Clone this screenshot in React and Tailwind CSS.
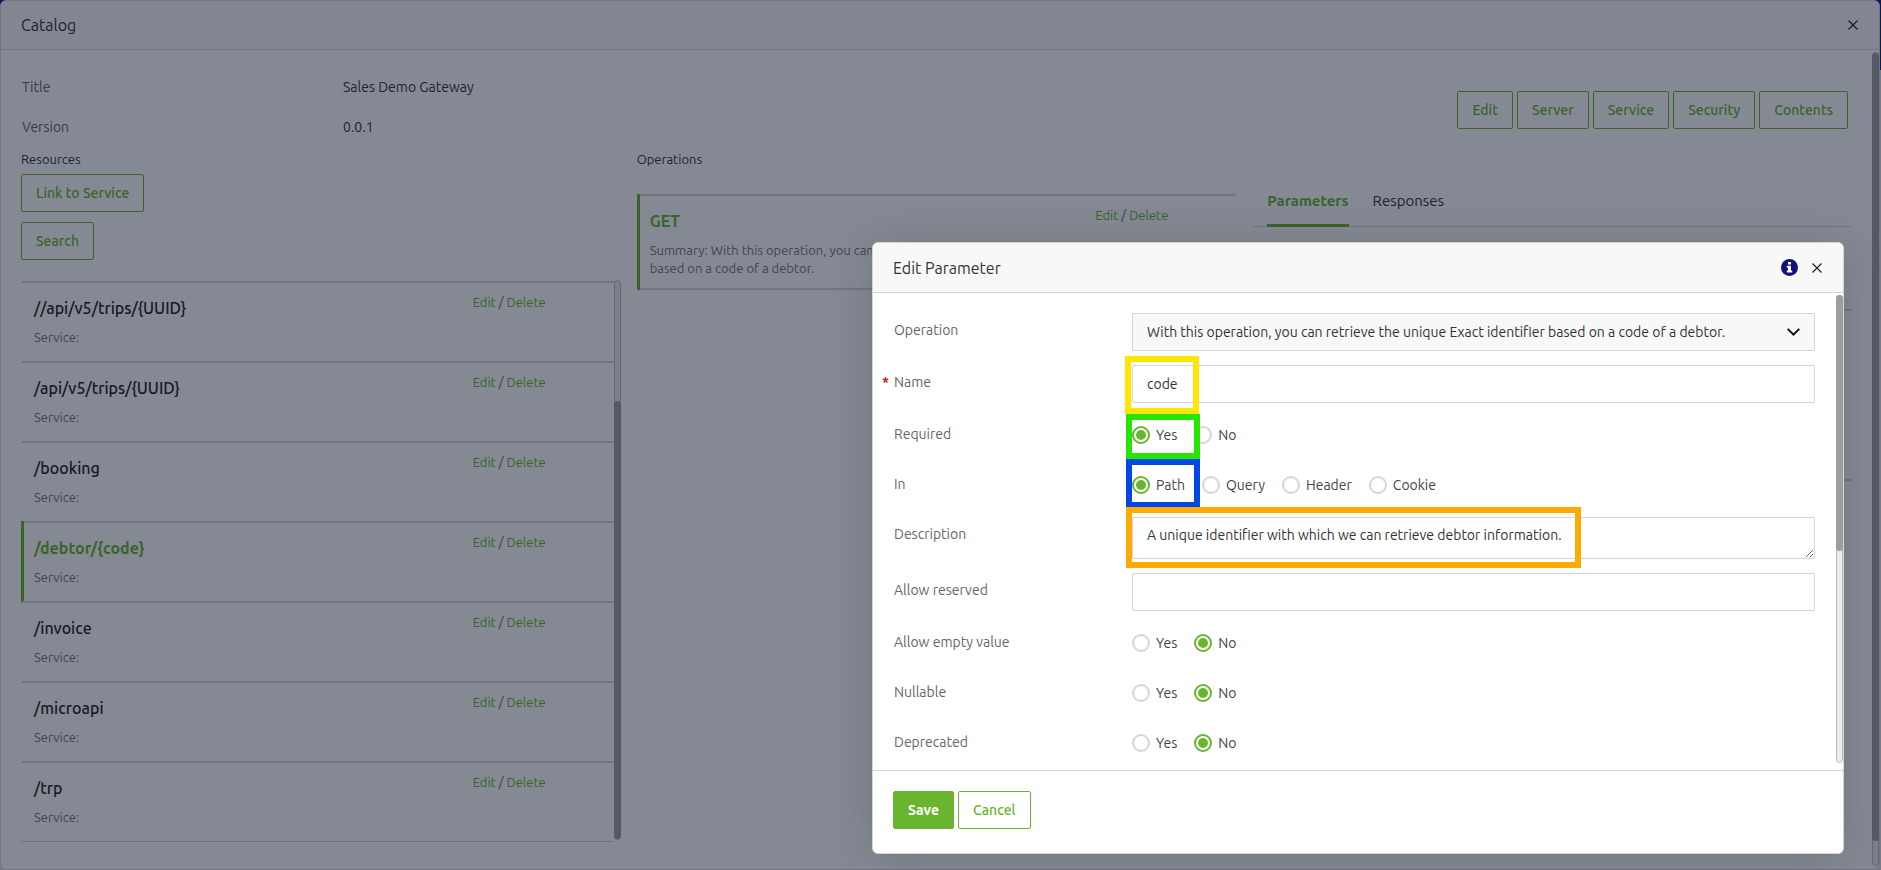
import React, { useState } from 'react'

const resources = [
  '//api/v5/trips/{UUID}',
  '/api/v5/trips/{UUID}',
  '/booking',
  '/debtor/{code}',
  '/invoice',
  '/microapi',
  '/trp',
]

const catalogActions = ['Edit', 'Server', 'Service', 'Security', 'Contents']

const operationText =
  'With this operation, you can retrieve the unique Exact identifier based on a code of a debtor.'

function CloseIcon() {
  return (
    <svg className="h-[10px] w-[10px]" viewBox="0 0 10 10" fill="none" stroke="#222" strokeWidth="1.2">
      <path d="M0.5 0.5L9.5 9.5M9.5 0.5L0.5 9.5" />
    </svg>
  )
}

function OutlineButton({ children }) {
  return (
    <button
      type="button"
      className="h-[38px] rounded-xs border border-[#69b52f] px-[14px] text-sm font-medium text-[#69b52f]"
    >
      {children}
    </button>
  )
}

function RowLinks() {
  return (
    <div className="w-[141px] shrink-0 pt-[9px] text-[13px] leading-5 text-[#666]">
      <a href="#edit" className="text-[#69b52f]">Edit</a>
      {' / '}
      <a href="#delete" className="text-[#69b52f]">Delete</a>
    </div>
  )
}

function Radios({ name, label, options, value }) {
  const [selected, setSelected] = useState(value)
  return (
    <div role="radiogroup" aria-label={label} className="flex h-9 items-center gap-[17px]">
      {options.map((option) => (
        <label key={option} className="flex items-center gap-[6px] text-sm leading-[18px] text-[#444]">
          <input
            type="radio"
            name={name}
            checked={selected === option}
            onChange={() => setSelected(option)}
            className="grid h-[18px] w-[18px] appearance-none place-content-center rounded-full border-2 border-[#d6d6d6] bg-white before:h-[10px] before:w-[10px] before:rounded-full checked:border-[#69b52f] checked:before:bg-[#69b52f]"
          />
          {option}
        </label>
      ))}
    </div>
  )
}

function Field({ label, htmlFor, required, children }) {
  const Label = htmlFor ? 'label' : 'span'
  return (
    <div className="mb-[14px] flex items-start">
      <Label htmlFor={htmlFor} className="relative w-[238px] shrink-0 pt-2 text-sm leading-[18px] text-[#666]">
        {required && <span className="absolute -left-3 font-bold text-[#b02a2a]">*</span>}
        {label}
      </Label>
      <div className="relative min-w-0 flex-1">{children}</div>
    </div>
  )
}

function CatalogPanel() {
  return (
    <div className="flex h-full flex-col overflow-hidden rounded-md border border-[#d9d9d9] bg-white">
      <header className="flex h-[49px] shrink-0 items-center justify-between border-b border-[#d9d9d9] bg-[#f8f8f8] pr-[21px] pl-5">
        <h1 className="text-base text-[#333]">Catalog</h1>
        <button type="button" aria-label="Close catalog"><CloseIcon /></button>
      </header>

      <div className="flex min-h-0 flex-1">
        <div className="min-w-0 flex-1 px-5 pt-[17px]">
          <div className="flex items-start justify-between">
            <dl className="grid grid-cols-[321px_auto] pl-px text-sm leading-10">
              <dt className="text-[#666]">Title</dt>
              <dd className="text-[#333]">Sales Demo Gateway</dd>
              <dt className="text-[#666]">Version</dt>
              <dd className="text-[#333]">0.0.1</dd>
            </dl>
            <div className="flex gap-1 pt-6 pr-1">
              {catalogActions.map((action) => (
                <OutlineButton key={action}>{action}</OutlineButton>
              ))}
            </div>
          </div>

          <div className="grid grid-cols-3 gap-4">
            <section>
              <h2 className="text-[13px] leading-6 text-[#333]">Resources</h2>
              <div className="mt-[3px] flex flex-col items-start gap-[10px]">
                <OutlineButton>Link to Service</OutlineButton>
                <OutlineButton>Search</OutlineButton>
              </div>
              <div className="mt-5 flex">
                <ul className="min-w-0 flex-1 border-b border-[#d9d9d9] pt-px pl-px">
                  {resources.map((path) => {
                    const active = path === '/debtor/{code}'
                    return (
                      <li key={path} className="relative flex h-20 border-t-2 border-[#d9d9d9]">
                        {active && <span className="absolute -top-0.5 -left-px h-[82px] w-[3px] bg-[#69b52f]" />}
                        <div className="min-w-0 flex-1 pt-[13px] pl-3">
                          <h3 className={active ? 'text-base leading-6 font-bold text-[#69b52f]' : 'text-base leading-6 font-medium text-[#222]'}>
                            {path}
                          </h3>
                          <p className="mt-[7px] text-[13px] leading-5 text-[#777]">Service:</p>
                        </div>
                        <RowLinks />
                      </li>
                    )
                  })}
                </ul>
                <div className="mb-0.5 flex w-[7px] flex-col justify-end rounded-full border border-[#bbb] bg-[#ececec]">
                  <div className="-mx-px h-[438px] rounded-full bg-[#9e9e9e]" />
                </div>
              </div>
            </section>

            <section>
              <h2 className="text-[13px] leading-6 text-[#333]">Operations</h2>
              <div className="relative mt-[23px] flex border-y-2 border-[#d9d9d9]">
                <span className="absolute -inset-y-0.5 left-0 w-[3px] bg-[#69b52f]" />
                <div className="min-w-0 flex-1 pt-[13px] pb-[11px] pl-[13px]">
                  <h3 className="text-base leading-6 font-bold text-[#69b52f]">GET</h3>
                  <p className="mt-2 text-[13px] leading-[18px] text-[#777]">Summary: {operationText}</p>
                </div>
                <RowLinks />
              </div>
            </section>

            <section>
              <div role="tablist" className="flex h-20 items-end gap-6 border-b border-[#d9d9d9] px-[15px] text-[15px]">
                <button type="button" role="tab" aria-selected="true" className="-mb-px border-b-3 border-[#69b52f] pb-[11px] leading-6 font-bold text-[#69b52f]">
                  Parameters
                </button>
                <button type="button" role="tab" aria-selected="false" className="-mb-px border-b-3 border-transparent pb-[11px] leading-6 text-[#333]">
                  Responses
                </button>
              </div>
              <div className="h-[84px] border-b-2 border-[#d9d9d9]" />
              <div className="h-[170px] border-b-2 border-[#d9d9d9]" />
            </section>
          </div>
        </div>

        <div className="mt-0.5 mb-[3px] w-[7px] shrink-0 rounded-full border border-[#bbb] bg-[#ececec]">
          <div className="-mx-px h-[97%] rounded-full bg-[#9e9e9e]" />
        </div>
      </div>
    </div>
  )
}

function EditParameterDialog() {
  return (
    <div
      role="dialog"
      aria-label="Edit Parameter"
      className="w-[972px] max-w-full overflow-hidden rounded-md border border-[#d4d4d4] bg-white shadow-[0_4px_48px_rgba(0,0,0,0.14)]"
    >
      <header className="flex h-[50px] items-center justify-between border-b border-[#d4d4d4] bg-[#f8f8f8] pr-[21px] pl-5">
        <h2 className="text-base text-[#333]">Edit Parameter</h2>
        <div className="flex items-center gap-[14px]">
          <button type="button" aria-label="Information">
            <svg className="h-[17px] w-[17px]" viewBox="0 0 17 17">
              <circle cx="8.5" cy="8.5" r="8.5" fill="#10107f" />
              <path d="M7 3h3v2.6H7zM5.8 6.8H10v4.8h1.2v1.9H5.8v-1.9H7V8.7H5.8z" fill="#fff" />
            </svg>
          </button>
          <button type="button" aria-label="Close dialog"><CloseIcon /></button>
        </div>
      </header>

      <div className="flex h-[477px] overflow-hidden">
        <form className="min-w-0 flex-1 pt-5 pr-[21px] pl-[21px]">
          <Field label="Operation" htmlFor="operation">
            <select
              id="operation"
              className="block h-[38px] w-full appearance-none rounded-xs border border-[#d4d4d4] bg-[#f8f8f8] px-[14px] text-sm text-[#333]"
            >
              <option>{operationText}</option>
            </select>
            <svg className="pointer-events-none absolute top-[15px] right-[15px] h-2 w-[13px]" viewBox="0 0 13 8" fill="none" stroke="#111" strokeWidth="2">
              <path d="M0.7 0.9L6.5 6.6L12.3 0.9" />
            </svg>
          </Field>
          <Field label="Name" htmlFor="name" required>
            <input
              id="name"
              type="text"
              defaultValue="code"
              className="block h-[38px] w-full rounded-xs border border-[#d4d4d4] px-[14px] text-sm text-[#333]"
            />
            <span className="pointer-events-none absolute -top-[9px] -left-[7px] h-[58px] w-[74px] border-6 border-[#ffe600]" />
          </Field>
          <Field label="Required">
            <Radios name="required" label="Required" options={['Yes', 'No']} value="Yes" />
            <span className="pointer-events-none absolute -top-[3px] -left-[6px] h-[45px] w-[74px] border-6 border-[#26e600]" />
          </Field>
          <Field label="In">
            <Radios name="in" label="In" options={['Path', 'Query', 'Header', 'Cookie']} value="Path" />
            <span className="pointer-events-none absolute -top-2 -left-[6px] h-[49px] w-[74px] border-6 border-[#0048e6]" />
          </Field>
          <Field label="Description" htmlFor="description">
            <textarea
              id="description"
              defaultValue="A unique identifier with which we can retrieve debtor information."
              className="block h-[42px] w-full resize-y overflow-hidden rounded-xs border border-[#d4d4d4] px-[14px] py-2 text-sm leading-[18px] text-[#333]"
            />
            <span className="pointer-events-none absolute -top-[10px] -left-[6px] h-[61px] w-[455px] border-6 border-[#ffaa00]" />
          </Field>
          <Field label="Allow reserved" htmlFor="reserved">
            <input
              id="reserved"
              type="text"
              className="block h-[38px] w-full rounded-xs border border-[#d4d4d4] px-[14px] text-sm text-[#333]"
            />
          </Field>
          <Field label="Allow empty value">
            <Radios name="allowEmpty" label="Allow empty value" options={['Yes', 'No']} value="No" />
          </Field>
          <Field label="Nullable">
            <Radios name="nullable" label="Nullable" options={['Yes', 'No']} value="No" />
          </Field>
          <Field label="Deprecated">
            <Radios name="deprecated" label="Deprecated" options={['Yes', 'No']} value="No" />
          </Field>
        </form>
        <div className="mt-0.5 mb-[7px] w-[7px] shrink-0 rounded-full border border-[#bbb] bg-[#ececec]">
          <div className="-mx-px -mt-px h-[256px] rounded-full bg-[#9e9e9e]" />
        </div>
      </div>

      <footer className="flex gap-1 border-t border-[#d4d4d4] px-5 pt-5 pb-6">
        <button type="button" className="h-[38px] rounded-xs border border-[#69b52f] bg-[#69b52f] px-[14px] text-sm font-bold text-white">
          Save
        </button>
        <OutlineButton>Cancel</OutlineButton>
      </footer>
    </div>
  )
}

export default function App() {
  return (
    <div className="relative h-screen overflow-hidden bg-[linear-gradient(#14148c_0_70px,#e5e5e5_70px)] pr-px font-[Ubuntu,'Noto_Sans',sans-serif]">
      <CatalogPanel />
      <div className="absolute inset-0 flex items-start justify-end bg-[rgba(12,20,40,0.5)] pt-[242px] pr-[37px]">
        <EditParameterDialog />
      </div>
    </div>
  )
}
